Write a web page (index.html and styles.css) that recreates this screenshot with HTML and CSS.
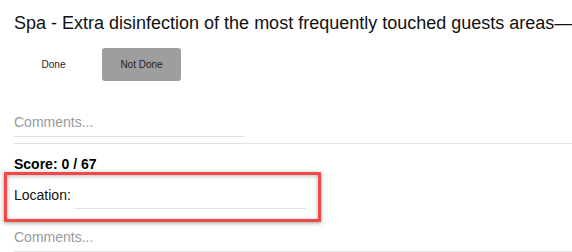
FILE: index.html
```html
<!DOCTYPE html>
<html>
<head>
<meta charset="utf-8">
<link rel="stylesheet" href="styles.css">
</head>
<body>
<div class="page">
  <h1 class="title">Spa - Extra disinfection of the most frequently touched guests areas—</h1>
  <div class="buttons">
    <button class="btn">Done</button>
    <button class="btn btn-active">Not Done</button>
  </div>
  <div class="comment">Comments...</div>
  <div class="separator"></div>
  <div class="score">Score: 0 / 67</div>
  <div class="location-row">
    <span class="label">Location:</span>
    <span class="field"></span>
    <div class="highlight"></div>
  </div>
  <div class="comment comment-wide">Comments...</div>
</div>
</body>
</html>
```

FILE: styles.css
```css
html, body {
  margin: 0;
  padding: 0;
  background: #ffffff;
}
body {
  width: 572px;
  height: 252px;
  overflow: hidden;
  font-family: "Liberation Sans", Arial, sans-serif;
  color: #111111;
}
.page {
  padding-left: 14px;
}
.title {
  margin: 0;
  padding-top: 13px;
  font-size: 18px;
  line-height: 21px;
  font-weight: normal;
  white-space: nowrap;
  overflow: hidden;
  color: #111111;
}
.buttons {
  display: flex;
  gap: 9px;
  margin-top: 14px;
}
.btn {
  width: 79px;
  height: 33px;
  border: none;
  border-radius: 3px;
  background: transparent;
  font-family: "Liberation Sans", Arial, sans-serif;
  font-size: 10px;
  color: #222222;
  padding: 0;
}
.btn-active {
  background: #9e9e9e;
}
.comment {
  margin-top: 33px;
  width: 230px;
  padding-bottom: 6px;
  border-bottom: 1px solid #e2e2e2;
  font-size: 14px;
  line-height: 16px;
  color: #9a9a9a;
}
.separator {
  margin-top: 6px;
  height: 1px;
  background: #e2e2e2;
}
.score {
  margin-top: 12px;
  font-size: 14px;
  line-height: 16px;
  font-weight: bold;
  color: #000000;
}
.location-row {
  position: relative;
  display: flex;
  align-items: flex-start;
  margin-top: 15px;
}
.label {
  font-size: 14px;
  line-height: 16px;
  color: #111111;
}
.field {
  margin-left: 4px;
  width: 231px;
  height: 21px;
  border-bottom: 1px solid #e2e2e2;
}
.highlight {
  position: absolute;
  left: -10px;
  top: -15px;
  width: 317px;
  height: 50px;
  box-sizing: border-box;
  border: 3px solid #f24848;
  box-shadow: 0 1px 4px rgba(0, 0, 0, 0.4), inset 0 1px 4px rgba(0, 0, 0, 0.3);
}
.comment-wide {
  margin-top: 20px;
  width: auto;
}
```
